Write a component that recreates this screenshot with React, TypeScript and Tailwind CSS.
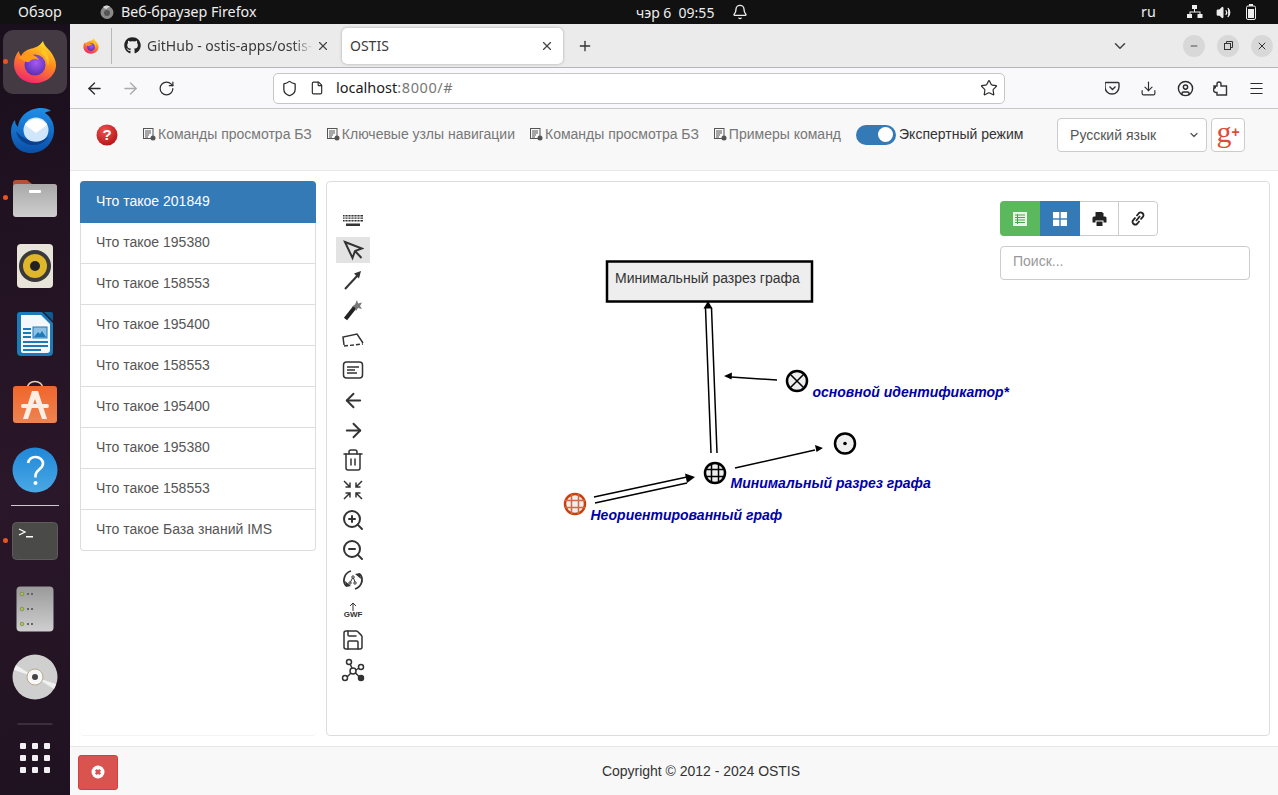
import React from 'react';
import { ArrowLeft, ArrowRight, RotateCw, Shield, File, Star, Download, CircleUser, Menu, X, Plus, ChevronDown, Minus, Bell, Trash2, ZoomIn, ZoomOut, Save, Volume2 } from 'lucide-react';
import { FaGithub } from 'react-icons/fa';

const ui = { fontFamily: '"Noto Sans", "Open Sans", sans-serif' };
const page = { fontFamily: '"Liberation Sans", Arial, sans-serif' };

function FirefoxLogo({ size }: { size: number }) {
  const id = `ff${size}`;
  return (
    <svg width={size} height={size} viewBox="0 0 44 44">
      <defs>
        <linearGradient id={`${id}a`} x1="0.7" y1="0" x2="0.3" y2="1">
          <stop offset="0" stopColor="#ffe226" />
          <stop offset="0.45" stopColor="#ff8a1f" />
          <stop offset="1" stopColor="#f0246e" />
        </linearGradient>
        <radialGradient id={`${id}b`} cx="0.55" cy="0.4" r="0.6">
          <stop offset="0" stopColor="#a65bf0" />
          <stop offset="1" stopColor="#5a2fb5" />
        </radialGradient>
      </defs>
      <path d="M30 1c1 4 3 6 7 10 4 5 6 10 6 14 0 10-9 18-21 18C10 43 1 35 1 24c0-5 2-10 5-13 0 2 1 4 2 5 2-4 5-6 9-7 4-1 9-2 13-8z" fill={`url(#${id}a)`} />
      <circle cx="22" cy="25" r="10.5" fill={`url(#${id}b)`} />
      <path d="M5 18c4-3 9-5 15-3 3 1 5 3 6 5-4-2-7-1-9 1-1 2-5 1-7-1-2-1-3-2-5-2z" fill="#ff9a20" />
      <path d="M30 9c5 4 7 10 5 17-1-6-3-10-7-13z" fill="#ffc61f" />
    </svg>
  );
}

function Thunderbird() {
  return (
    <svg width="50" height="50" viewBox="0 0 50 50">
      <defs>
        <linearGradient id="tb" x1="0.5" y1="0" x2="0.5" y2="1">
          <stop offset="0" stopColor="#1f8fe8" />
          <stop offset="1" stopColor="#0a4fa8" />
        </linearGradient>
      </defs>
      <path d="M1 26c0-5 2-9 4-11 0 3 1 5 3 7 1-10 10-19 23-19 4 0 8 1 10 3-3 0-5 1-6 2 6 4 9 10 9 17 0 13-10 23-23 23S1 39 1 26z" fill="url(#tb)" />
      <circle cx="26" cy="25" r="12.5" fill="#cfe6fb" />
      <path d="M15 20l11 8 11-8v-1c-3-3-7-5-11-5s-8 2-11 5z" fill="#fff" />
      <path d="M6 26c2 10 11 15 20 14 6-1 10-4 12-8-6 5-14 6-20 3-5-2-9-5-12-9z" fill="#0b3f8f" />
    </svg>
  );
}

function FilesIcon() {
  return (
    <svg width="46" height="46" viewBox="0 0 46 46">
      <defs>
        <linearGradient id="fold" x1="0" y1="0" x2="0" y2="1">
          <stop offset="0" stopColor="#a8a8a8" />
          <stop offset="1" stopColor="#cfcfcf" />
        </linearGradient>
      </defs>
      <path d="M1 8a3 3 0 0 1 3-3h11l5 4h22a3 3 0 0 1 3 3v8H1z" fill="#b4503a" />
      <rect x="1" y="9" width="44" height="33" rx="3" fill="url(#fold)" />
      <rect x="17" y="15" width="12" height="3" rx="1" fill="#fff" />
    </svg>
  );
}

function Rhythmbox() {
  return (
    <svg width="38" height="46" viewBox="0 0 38 46">
      <rect x="1" y="1" width="36" height="44" rx="4" fill="#e8e4da" />
      <circle cx="19" cy="23" r="16" fill="#3a3a3a" />
      <circle cx="19" cy="23" r="12" fill="#e0b62a" />
      <circle cx="19" cy="23" r="5" fill="#222" />
    </svg>
  );
}

function Writer() {
  return (
    <svg width="38" height="46" viewBox="0 0 38 46">
      <path d="M4 1h22l11 11v29a4 4 0 0 1-4 4H5a4 4 0 0 1-4-4V4a3 3 0 0 1 3-3z" fill="#1c7ab8" />
      <path d="M5 4h20l9 9v26a3 3 0 0 1-3 3H7a2 2 0 0 1-2-2z" fill="#f4f8fb" />
      <path d="M28 1h7a2 2 0 0 1 2 2v7z" fill="#0f5c90" />
      <rect x="7" y="17" width="8" height="2" fill="#1c7ab8" />
      <rect x="7" y="21" width="8" height="2" fill="#1c7ab8" />
      <rect x="7" y="25" width="8" height="2" fill="#1c7ab8" />
      <rect x="17" y="16" width="14" height="11" fill="#8cc1e4" stroke="#1c7ab8" />
      <path d="M18 26l4-5 2 2 2-3 4 6z" fill="#1c7ab8" />
      <rect x="7" y="30" width="25" height="2" fill="#1c7ab8" />
      <rect x="7" y="34" width="25" height="2" fill="#1c7ab8" />
      <rect x="7" y="38" width="18" height="2" fill="#1c7ab8" />
    </svg>
  );
}

function Software() {
  return (
    <svg width="46" height="46" viewBox="0 0 46 46">
      <defs>
        <linearGradient id="sw" x1="0" y1="0" x2="0" y2="1">
          <stop offset="0" stopColor="#f0652c" />
          <stop offset="1" stopColor="#ee8450" />
        </linearGradient>
      </defs>
      <path d="M15 10c0-10 16-10 16 0" fill="none" stroke="#e8d0b0" strokeWidth="1.5" />
      <rect x="1" y="7" width="44" height="37" rx="3" fill="url(#sw)" />
      <path d="M20 12h6l9 28h-5l-7-20-7 20h-5z" fill="#fdeee4" />
      <rect x="9" y="25" width="28" height="4" rx="2" fill="#fdeee4" />
    </svg>
  );
}

function Help() {
  return (
    <svg width="46" height="46" viewBox="0 0 46 46">
      <defs>
        <linearGradient id="hp" x1="0" y1="0" x2="0" y2="1">
          <stop offset="0" stopColor="#2088d8" />
          <stop offset="1" stopColor="#4aa8e4" />
        </linearGradient>
      </defs>
      <circle cx="23" cy="23" r="22.5" fill="url(#hp)" />
      <path d="M16 16c1-4 4-6 7.500-6 4.500 0 7.500 3 7.500 6.500 0 6-7.500 6-7.500 12v2" fill="none" stroke="#fff" strokeWidth="2.600" />
      <circle cx="23.500" cy="36" r="2" fill="#fff" />
    </svg>
  );
}

function Terminal() {
  return (
    <svg width="46" height="38" viewBox="0 0 46 38">
      <rect x="0.500" y="0.500" width="45" height="37" rx="4" fill="#4a4a48" stroke="#5c5c5a" />
      <path d="M7 7l6 3-6 3" fill="none" stroke="#fff" strokeWidth="1.300" />
      <rect x="14" y="14" width="7" height="1.500" fill="#fff" />
    </svg>
  );
}

function ServerIcon() {
  return (
    <svg width="38" height="46" viewBox="0 0 38 46">
      <defs>
        <linearGradient id="srv" x1="0" y1="0" x2="0" y2="1">
          <stop offset="0" stopColor="#9a9a9a" />
          <stop offset="1" stopColor="#cfcfcf" />
        </linearGradient>
      </defs>
      <rect x="0.500" y="0.500" width="37" height="45" rx="4" fill="url(#srv)" />
      {[8, 23, 38].map((y) => (
        <g key={y}>
          <circle cx="6" cy={y} r="1.800" fill="#a8c850" stroke="#5c6a30" strokeWidth="0.500" />
          <rect x="11" y={y - 1} width="2" height="2" fill="#666" />
          <rect x="15" y={y - 1} width="2" height="2" fill="#666" />
        </g>
      ))}
    </svg>
  );
}

function Cd() {
  return (
    <svg width="46" height="46" viewBox="0 0 46 46">
      <circle cx="23" cy="23" r="22.500" fill="#cfcfcf" />
      <path d="M23 23L4 11a22.500 22.500 0 0 0-2 5zM23 23l19 12a22.500 22.500 0 0 0 2-5z" fill="#f1f1f1" />
      <circle cx="23" cy="23" r="8" fill="#f7f7f7" stroke="#b8a88c" />
      <circle cx="23" cy="23" r="3" fill="#444" />
    </svg>
  );
}

function DockItem({ children, active, dot }: { children: React.ReactNode; active?: boolean; dot?: boolean }) {
  return (
    <div className="relative flex h-[68px] w-full items-center justify-center">
      {active && <div className="absolute left-[3px] top-[2px] h-[64px] w-[64px] rounded-[10px] bg-[#443a44]" />}
      {dot && <div className="absolute left-[3px] top-[31px] h-[5px] w-[5px] rounded-full bg-[#e95420]" />}
      <div className="relative flex">{children}</div>
    </div>
  );
}

function CmdIcon() {
  return (
    <svg width="13" height="13" viewBox="0 0 13 13" className="mr-[2px] shrink-0 text-[#555]">
      <rect x="0.500" y="0.500" width="9.500" height="10" fill="none" stroke="currentColor" />
      <path d="M2 3h6M2 5h6M2 7h4M2 9h3" stroke="currentColor" />
      <circle cx="10" cy="10" r="2.500" fill="currentColor" />
    </svg>
  );
}

function NavLink({ text, cls }: { text: string; cls: string }) {
  return (
    <a className={`flex items-center text-[14px] text-[#777] ${cls}`}>
      <CmdIcon />
      {text}
    </a>
  );
}

const listItems = [
  'Что такое 195380',
  'Что такое 158553',
  'Что такое 195400',
  'Что такое 158553',
  'Что такое 195400',
  'Что такое 195380',
  'Что такое 158553',
  'Что такое База знаний IMS',
];

const ic = 'stroke-[#333]';

function ToolBtn({ children, on }: { children: React.ReactNode; on?: boolean }) {
  return (
    <div className={`mb-[4px] flex h-[26px] w-[34px] items-center justify-center ${on ? 'bg-[#e3e3e3]' : ''}`}>
      {children}
    </div>
  );
}

function Tools() {
  return (
    <div className="ml-[9px] flex w-[34px] shrink-0 flex-col pt-[25px] text-[#333]">
      <ToolBtn>
        <svg width="20" height="13" viewBox="0 0 20 13" fill="#333">
          <rect x="0" y="1" width="20" height="1.500" />
          <path d="M0 3.500h20v1.300H0zM0 6h20v1.500H0z" />
          <path d="M2 1v7M5 1v7M8 1v7M11 1v7M14 1v7M17 1v7" stroke="#fff" strokeWidth="0.800" />
          <rect x="3" y="9.500" width="14" height="2.500" />
        </svg>
      </ToolBtn>
      <ToolBtn on>
        <svg width="22" height="22" viewBox="0 0 22 22" fill="none" stroke="#333" strokeWidth="2">
          <path d="M3 3l17 6.500-7 2.500-2.500 7zM13 12l6.500 7" />
        </svg>
      </ToolBtn>
      <ToolBtn>
        <svg width="20" height="22" viewBox="0 0 20 22">
          <path d="M2 20L15 6" stroke="#333" strokeWidth="2" />
          <path d="M18 2l-7 2.500 5 5z" fill="#333" />
        </svg>
      </ToolBtn>
      <ToolBtn>
        <svg width="20" height="22" viewBox="0 0 20 22">
          <path d="M2.500 20L12 8" stroke="#222" strokeWidth="4" />
          <path d="M14 1l1 3.500 4-1-2 3.500 2 3-4-1-2 3-1-3.500-3-1 3-2z" fill="#777" />
        </svg>
      </ToolBtn>
      <ToolBtn>
        <svg width="24" height="16" viewBox="0 0 24 16" fill="none" stroke="#333" strokeWidth="1.500">
          <path d="M3 13L2 5l14-3 6 9" />
          <path d="M3 14l19-2" strokeDasharray="4 2" />
        </svg>
      </ToolBtn>
      <ToolBtn>
        <svg width="22" height="18" viewBox="0 0 22 18" fill="none" stroke="#333" strokeWidth="1.500">
          <rect x="1.500" y="1" width="19" height="16" rx="3" />
          <path d="M5 6h12M5 9h8M5 12h10" />
        </svg>
      </ToolBtn>
      <ToolBtn><ArrowLeft size={23} className={ic} strokeWidth={2} /></ToolBtn>
      <ToolBtn><ArrowRight size={23} className={ic} strokeWidth={2} /></ToolBtn>
      <ToolBtn><Trash2 size={24} className={ic} strokeWidth={1.500} /></ToolBtn>
      <ToolBtn>
        <svg width="22" height="22" viewBox="0 0 22 22" fill="none" stroke="#333" strokeWidth="1.500">
          <path d="M2 2l6 6M8 3.500V8H3.500M20 2l-6 6M14 3.500V8h4.500M2 20l6-6M8 18.500V14H3.500M20 20l-6-6M14 18.500V14h4.500" />
        </svg>
      </ToolBtn>
      <ToolBtn><ZoomIn size={24} className={ic} strokeWidth={2} /></ToolBtn>
      <ToolBtn><ZoomOut size={24} className={ic} strokeWidth={2} /></ToolBtn>
      <ToolBtn>
        <svg width="24" height="24" viewBox="0 0 24 24" fill="none" stroke="#333" strokeWidth="1.800">
          <path d="M5 18A9.500 9.500 0 0 1 10 3M19 6a9.500 9.500 0 0 1-5 15" />
          <path d="M4 13l1 6 5-1zM20 11l-1-6-5 1z" fill="#333" stroke="none" />
          <circle cx="12" cy="9" r="1.200" strokeWidth="1" />
          <circle cx="9" cy="15" r="1.200" strokeWidth="1" />
          <circle cx="14" cy="15" r="1.200" strokeWidth="1" />
          <path d="M11.500 10l-2 4M12.500 10l1.500 4" strokeWidth="1" />
        </svg>
      </ToolBtn>
      <ToolBtn>
        <div className="flex flex-col items-center leading-none">
          <svg width="8" height="9" viewBox="0 0 8 9" fill="none" stroke="#333"><path d="M4 9V1M1 4l3-3 3 3" /></svg>
          <span className="text-[8px] font-bold text-[#333]">GWF</span>
        </div>
      </ToolBtn>
      <ToolBtn><Save size={24} className={ic} strokeWidth={1.500} /></ToolBtn>
      <ToolBtn>
        <svg width="24" height="24" viewBox="0 0 24 24" fill="none" stroke="#333" strokeWidth="1.500">
          <circle cx="12" cy="13" r="3" />
          <circle cx="8" cy="4" r="2.500" />
          <circle cx="20" cy="9" r="2.500" />
          <circle cx="4" cy="20" r="2.500" />
          <circle cx="20" cy="20" r="2.500" fill="#333" />
          <path d="M9 6l2 4M15 12l3-2M10 15l-4 4M14.500 15l4 4" />
        </svg>
      </ToolBtn>
    </div>
  );
}

function GridNode({ cx, cy, stroke, line }: { cx: number; cy: number; stroke: string; line: string }) {
  return (
    <g>
      <circle cx={cx} cy={cy} r="10" fill="#eee" stroke={stroke} strokeWidth="2.500" />
      <path
        d={`M${cx - 10} ${cy - 3.500}h20M${cx - 10} ${cy + 3.500}h20M${cx - 3.500} ${cy - 10}v20M${cx + 3.500} ${cy - 10}v20`}
        stroke={line}
        strokeWidth="1.500"
      />
    </g>
  );
}

function Diagram() {
  const lbl = { fontFamily: '"Liberation Sans", Arial, sans-serif', fontSize: 14, fontWeight: 700, fontStyle: 'italic' as const, fill: '#0000a8' };
  return (
    <svg className="absolute left-0 top-0 h-full w-full" viewBox="327 182 942 553" preserveAspectRatio="xMinYMin">
      <rect x="607" y="261.500" width="205" height="40" fill="#eee" stroke="#000" strokeWidth="2.500" />
      <text x="615" y="283" style={{ fontFamily: '"Liberation Sans", Arial, sans-serif', fontSize: 14, fill: '#333' }}>Минимальный разрез графа</text>
      <path d="M705.500 308L711 453M711.500 308L717 453" stroke="#000" strokeWidth="1.500" fill="none" />
      <path d="M708 301l-4.500 7.500h9z" fill="#000" />
      <path d="M777 380L731 377" stroke="#000" strokeWidth="1.500" />
      <path d="M724 376l8-3.500-.5 7z" fill="#000" />
      <circle cx="797" cy="381" r="10" fill="#eee" stroke="#000" strokeWidth="2.500" />
      <path d="M790 374l14 14M804 374l-14 14" stroke="#000" strokeWidth="1.500" />
      <circle cx="845" cy="443.500" r="10" fill="#eee" stroke="#000" strokeWidth="2.500" />
      <circle cx="845" cy="443.500" r="1.800" fill="#000" />
      <path d="M735 468L815 450" stroke="#000" strokeWidth="1.500" />
      <path d="M823 448l-8-3 1.500 7z" fill="#000" />
      <path d="M594 497L687 477M595 503L687 483" stroke="#000" strokeWidth="1.500" fill="none" />
      <path d="M695 477l-10-3.500 2 9.500z" fill="#000" />
      <GridNode cx={715} cy={473} stroke="#000" line="#000" />
      <GridNode cx={575} cy={504} stroke="#c9400d" line="#d06a40" />
      <text x="812.500" y="397" style={lbl}>основной идентификатор*</text>
      <text x="730.500" y="488" style={lbl}>Минимальный разрез графа</text>
      <text x="590.500" y="520" style={lbl}>Неориентированный граф</text>
    </svg>
  );
}

export default function App() {
  return (
    <div className="flex h-[795px] w-[1278px] flex-col overflow-hidden bg-white" style={ui}>
      {/* System bar */}
      <div className="relative flex h-[24px] shrink-0 items-center bg-[#111111] text-[14.3px] text-[#eeeeee]">
        <span className="ml-[18px] w-[82px]">Обзор</span>
        <svg width="14" height="14" viewBox="0 0 14 14" className="mr-[7px]">
          <circle cx="7" cy="7.500" r="6.500" fill="#8a8a8a" />
          <path d="M3 2c2-2 6-2 7 0-2 0-3 1-3 2-2 0-3-1-4-2z" fill="#d8d8d8" />
          <circle cx="7" cy="8" r="3" fill="#555" />
        </svg>
        <span className="w-[137px]">Веб-браузер Firefox</span>
        <span className="ml-[378px] w-[95px] whitespace-pre text-[14px]">чэр 6  09:55</span>
        <Bell size={16} className="ml-[1px]" />
        <span className="ml-[393px]">ru</span>
        <svg width="16" height="14" viewBox="0 0 16 14" fill="#eee" className="ml-[31px]">
          <rect x="5" y="0" width="5" height="4" />
          <rect x="0" y="9" width="5" height="4" />
          <rect x="10.500" y="9" width="5" height="4" />
          <path d="M7 4h1v2.500h5.500V9h-1V7.500h-9V9h-1V6.500H7z" />
        </svg>
        <Volume2 size={15} className="ml-[13px]" fill="#eee" />
        <svg width="10" height="16" viewBox="0 0 10 16" className="ml-[15px]">
          <rect x="0.500" y="2" width="9" height="13.500" rx="1.500" fill="none" stroke="#eee" />
          <rect x="3" y="0" width="4" height="2" fill="#eee" />
          <rect x="2" y="5" width="6" height="9" fill="#eee" />
        </svg>
      </div>

      <div className="flex min-h-0 flex-1">
        {/* Dock */}
        <div className="flex w-[70px] shrink-0 flex-col bg-[linear-gradient(170deg,#1a0f1c,#2a1729_60%,#1f1220)] pt-[4px]">
          <DockItem active dot><FirefoxLogo size={44} /></DockItem>
          <DockItem><Thunderbird /></DockItem>
          <DockItem dot><FilesIcon /></DockItem>
          <DockItem><Rhythmbox /></DockItem>
          <DockItem><Writer /></DockItem>
          <DockItem><Software /></DockItem>
          <DockItem><Help /></DockItem>
          <div className="flex h-[3px] items-center justify-center"><div className="h-px w-[48px] bg-[#cfc8cf]" /></div>
          <DockItem dot><Terminal /></DockItem>
          <DockItem><ServerIcon /></DockItem>
          <DockItem><Cd /></DockItem>
          <div className="mx-auto mt-[12px] h-[2px] w-[36px] rounded-t-[3px] bg-[#3c2e3c]" />
          <div className="mx-auto mt-[18px] grid w-[30px] grid-cols-3 gap-[6px]">
            {Array.from({ length: 9 }).map((_, i) => (
              <div key={i} className="h-[6px] w-[6px] rounded-[1px] bg-[#f2f0f2]" />
            ))}
          </div>
        </div>

        {/* Browser */}
        <div className="flex min-w-0 flex-1 flex-col">
          {/* Tab bar */}
          <div className="flex h-[44px] shrink-0 items-center border-b border-[#b5b5b5] bg-[#ebebeb] text-[14px] text-[#3a3a3a]">
            <div className="flex h-[36px] w-[42px] items-center justify-center border-r border-[#b8b8b8]">
              <FirefoxLogo size={16} />
            </div>
            <div className="flex h-[36px] w-[228px] items-center overflow-hidden pl-[12px]">
              <FaGithub size={17} className="mr-[6px] shrink-0 text-[#222]" />
              <span className="w-[166px] shrink-0 whitespace-nowrap [mask-image:linear-gradient(to_right,black_88%,transparent)]">GitHub - ostis-apps/ostis-</span>
              <X size={14} className="ml-[3px] shrink-0 text-[#444]" />
            </div>
            <div className="ml-[2px] flex h-[36px] w-[221px] items-center rounded-[5px] bg-white pl-[8px] pr-[9px] shadow-[0_0_3px_rgba(0,0,0,0.3)]">
              <span className="flex-1">OSTIS</span>
              <X size={14} className="text-[#444]" />
            </div>
            <Plus size={16} className="ml-[14px] text-[#333]" />
            <ChevronDown size={18} className="ml-[518px] text-[#444]" />
            <div className="ml-[54px] flex h-[22px] w-[22px] items-center justify-center rounded-full bg-[#d8d8d8]"><Minus size={10} className="text-[#333]" /></div>
            <div className="ml-[12px] flex h-[22px] w-[22px] items-center justify-center rounded-full bg-[#d8d8d8]">
              <svg width="9" height="9" viewBox="0 0 9 9" fill="none" stroke="#333"><rect x="0.500" y="2.500" width="6" height="6" /><path d="M2.500 2.500V.5h6v6h-2" /></svg>
            </div>
            <div className="ml-[12px] flex h-[22px] w-[22px] items-center justify-center rounded-full bg-[#d8d8d8]"><X size={12} className="text-[#333]" /></div>
          </div>

          {/* URL bar */}
          <div className="flex h-[41px] shrink-0 items-center border-b border-[#c8c8c8] bg-[#f9f9fb] text-[#2b2b2b]">
            <ArrowLeft size={19} className="ml-[15px]" strokeWidth={1.700} />
            <ArrowRight size={19} className="ml-[17px] text-[#aaa]" strokeWidth={1.700} />
            <RotateCw size={17} className="ml-[18px]" strokeWidth={1.700} />
            <div className="ml-[98px] flex h-[31px] w-[732px] items-center rounded-[5px] border border-[#c6c6c6] bg-white pl-[7px] pr-[6px] text-[14.500px]">
              <Shield size={17} strokeWidth={1.800} />
              <File size={14} strokeWidth={2} className="ml-[12px]" />
              <span className="ml-[12px] text-[#1a1a1a]">localhost</span>
              <span className="flex-1 tracking-[0.6px] text-[#777]">:8000/#</span>
              <Star size={18} strokeWidth={1.600} />
            </div>
            <svg width="15" height="14" viewBox="0 0 15 14" fill="none" stroke="#333" strokeWidth="1.400" className="ml-[100px]">
              <path d="M1.500 1.500h12a1 1 0 0 1 1 1V6a7 7 0 0 1-14 0V2.500a1 1 0 0 1 1-1z" transform="translate(-0.500 0)" />
              <path d="M4.500 5.500l3 3 3-3" />
            </svg>
            <Download size={17} className="ml-[20px]" strokeWidth={1.600} />
            <CircleUser size={17} className="ml-[20px]" strokeWidth={2} />
            <svg width="15" height="16" viewBox="0 0 15 16" fill="none" stroke="#333" strokeWidth="1.400" className="ml-[19px]">
              <path d="M1 6h3V4a2 2 0 0 1 4 0v2h5.500v9H4v-2.500H3a2.500 2.500 0 0 1 0-5H1z" />
            </svg>
            <Menu size={17} className="ml-[20px]" strokeWidth={1.500} />
          </div>

          {/* Page */}
          <div className="flex min-h-0 flex-1 flex-col bg-white text-[14px] text-[#333]" style={page}>
            <div className="flex h-[62px] shrink-0 items-center border-b border-[#e7e7e7] bg-[#f8f8f8] pb-[10px]">
              <svg width="22" height="22" viewBox="0 0 22 22" className="ml-[26px] mr-[25px]">
                <defs>
                  <radialGradient id="qm" cx="0.4" cy="0.3" r="0.8">
                    <stop offset="0" stopColor="#f05050" />
                    <stop offset="1" stopColor="#b01010" />
                  </radialGradient>
                </defs>
                <circle cx="11" cy="11" r="10.500" fill="url(#qm)" />
                <text x="11" y="16" textAnchor="middle" fill="#fff" style={{ fontSize: 15, fontWeight: 700, fontFamily: '"Liberation Sans", sans-serif' }}>?</text>
              </svg>
              <NavLink text="Команды просмотра БЗ" cls="mr-[15px]" />
              <NavLink text="Ключевые узлы навигации" cls="mr-[15px]" />
              <NavLink text="Команды просмотра БЗ" cls="mr-[15px]" />
              <NavLink text="Примеры команд" cls="mr-[15px]" />
              <div className="flex h-[20px] w-[40px] items-center justify-end rounded-full bg-[#337ab7] pr-[3px]">
                <div className="h-[15px] w-[15px] rounded-full bg-white" />
              </div>
              <span className="ml-[3px] w-[158px]">Экспертный режим</span>
              <div className="mt-[1px] flex h-[34px] w-[150px] items-center justify-between rounded-[4px] border border-[#ccc] bg-white pl-[12px] pr-[6px] text-[#555]">
                Русский язык
                <ChevronDown size={12} strokeWidth={2.500} />
              </div>
              <div className="ml-[4px] mt-[1px] flex h-[34px] w-[34px] items-center justify-center rounded-[4px] border border-[#ccc] bg-white">
                <span className="-mt-[6px] text-[30px] leading-none text-[#dd4b39]" style={{ fontFamily: '"Liberation Serif", serif' }}>g</span>
                <span className="-mt-[6px] text-[14px] font-bold leading-none text-[#dd4b39]">+</span>
              </div>
            </div>

            <div className="flex min-h-0 flex-1 px-[8px] pb-[10px] pt-[10px]">
              {/* Sidebar */}
              <div className="ml-[2px] mr-[10px] w-[236px] shrink-0 rounded-[4px] border-b border-[#f4f4f4]">
                <div className="flex h-[42px] items-center rounded-t-[4px] bg-[#337ab7] pb-[1px] pl-[16px] text-white">Что такое 201849</div>
                <div className="rounded-b-[4px] border-x border-b border-[#ddd]">
                  {listItems.map((t, i) => (
                    <div key={i} className={`flex items-center pl-[15px] text-[#555] ${i < listItems.length - 1 ? 'h-[41px] border-b border-[#ddd] pb-[2px]' : 'h-[40px] pb-[1px]'}`}>{t}</div>
                  ))}
                </div>
              </div>

              {/* Main panel */}
              <div className="relative flex flex-1 rounded-[4px] border border-[#ddd] bg-white">
                <Diagram />
                <Tools />
                <div className="relative ml-auto mr-[19px] flex w-[250px] flex-col pt-[19px]">
                  <div className="flex h-[35px] w-[158px] overflow-hidden rounded-[4px]">
                    <div className="flex w-[40px] items-center justify-center bg-[#5cb85c]">
                      <svg width="14" height="14" viewBox="0 0 14 14"><rect width="14" height="14" fill="#e8f5e8" /><path d="M2 3h10M2 5.500h10M2 8h10M2 10.500h10" stroke="#4aa54a" strokeWidth="1.200" /><path d="M4.500 2v10" stroke="#4aa54a" /></svg>
                    </div>
                    <div className="flex w-[40px] items-center justify-center bg-[#337ab7]">
                      <svg width="14" height="14" viewBox="0 0 14 14" fill="#fff"><rect width="6.300" height="6.300" /><rect x="7.700" width="6.300" height="6.300" /><rect y="7.700" width="6.300" height="6.300" /><rect x="7.700" y="7.700" width="6.300" height="6.300" /></svg>
                    </div>
                    <div className="flex w-[39px] items-center justify-center border-y border-r border-[#ccc] bg-white">
                      <svg width="15" height="14" viewBox="0 0 15 14" fill="#222">
                        <path d="M3.500 0h6.500l1.500 1.500V5h-8z" />
                        <path d="M0.500 6a1.500 1.500 0 0 1 1.500-1.500h11A1.500 1.500 0 0 1 14.500 6v4.500h-3V8.500h-8v2h-3z" />
                        <rect x="4.500" y="9.500" width="6" height="4.500" />
                      </svg>
                    </div>
                    <div className="flex w-[39px] items-center justify-center rounded-r-[4px] border-y border-r border-[#ccc] bg-white">
                      <svg width="14" height="15" viewBox="0 0 14 15" fill="none" stroke="#222" strokeWidth="1.800">
                        <path d="M5.500 5L8 2a2.300 2.300 0 0 1 3.300 0l.5.500a2.300 2.300 0 0 1 0 3.300L9.500 8.500" />
                        <path d="M8.500 10L6 13a2.300 2.300 0 0 1-3.300 0l-.5-.5a2.300 2.300 0 0 1 0-3.300L4.500 6.500" />
                        <path d="M5 10l4-5" />
                      </svg>
                    </div>
                  </div>
                  <div className="mt-[10px] flex h-[34px] items-center rounded-[4px] border border-[#ccc] bg-white pb-[3px] pl-[12px] text-[#999]">Поиск...</div>
                </div>
              </div>
            </div>

            {/* Footer */}
            <div className="flex h-[49px] shrink-0 items-center border-t border-[#e7e7e7] bg-[#f8f8f8] pl-[8px]">
              <div className="mt-[2px] flex h-[35px] w-[40px] items-center justify-center rounded-[3px] border border-[#d43f3a] bg-[#d9534f]">
                <svg width="14" height="14" viewBox="0 0 14 14">
                  <circle cx="7" cy="7" r="6.500" fill="#fff" />
                  <path d="M4.800 4.800l4.400 4.400M9.200 4.800l-4.400 4.400" stroke="#d9534f" strokeWidth="2.600" />
                </svg>
              </div>
              <span className="ml-[484px] tracking-[-0.02px]">Copyright © 2012 - 2024 OSTIS</span>
            </div>
          </div>
        </div>
      </div>
    </div>
  );
}
